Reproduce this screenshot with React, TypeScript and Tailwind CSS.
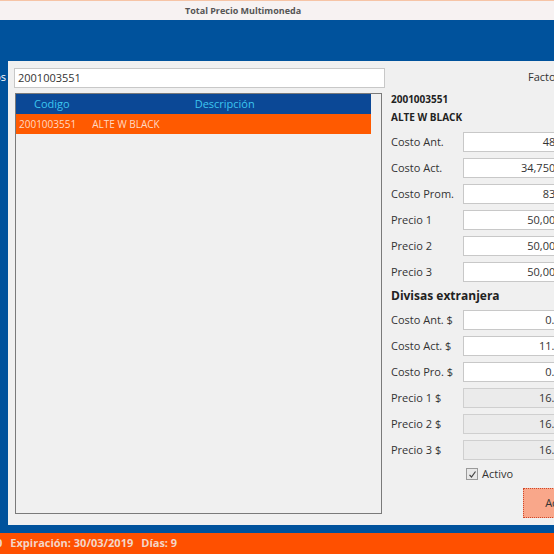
import React from "react";

const font = { fontFamily: '"Open Sans", "Noto Sans", "Liberation Sans", sans-serif' };

type Row = { label: string; value: string; disabled?: boolean };

const costos: Row[] = [
  { label: "Costo Ant.", value: "48,000" },
  { label: "Costo Act.", value: "34,750.000" },
  { label: "Costo Prom.", value: "83,000" },
  { label: "Precio 1", value: "50,000.00" },
  { label: "Precio 2", value: "50,000.00" },
  { label: "Precio 3", value: "50,000.00" },
];

const divisas: Row[] = [
  { label: "Costo Ant. $", value: "0.00" },
  { label: "Costo Act. $", value: "11.00" },
  { label: "Costo Pro. $", value: "0.00" },
  { label: "Precio 1 $", value: "16.00", disabled: true },
  { label: "Precio 2 $", value: "16.00", disabled: true },
  { label: "Precio 3 $", value: "16.00", disabled: true },
];

function Field({ row, wide }: { row: Row; wide?: boolean }) {
  return (
    <div className="flex h-[20px] items-center">
      <div className="w-[72px] shrink-0 text-[11px] text-[#333]">{row.label}</div>
      <div
        className={
          "flex h-[20px] shrink-0 items-center justify-end border px-[3px] text-[11px] text-[#333] " +
          (wide ? "w-[118px] " : "w-[108px] ") +
          (row.disabled ? "border-[#cfcfcf] bg-[#ebebeb]" : "border-[#c8c8c8] bg-white")
        }
      >
        {row.value}
      </div>
    </div>
  );
}

export default function App() {
  return (
    <div className="flex h-[554px] w-[554px] flex-col overflow-hidden bg-[#00529c]" style={font}>
      {/* window title */}
      <div className="flex h-[20px] shrink-0 items-center border-t border-[#f6c4a6] bg-[#f7f2f2] pl-[185px] text-[9px] font-bold text-[#555]">
        Total Precio Multimoneda
      </div>

      {/* blue header band */}
      <div className="h-[41px] shrink-0 bg-[#00529c]" />

      <div className="flex h-[464px] shrink-0">
        {/* left margin with clipped caption */}
        <div className="mr-[2px] flex w-[6px] shrink-0 justify-end overflow-hidden pt-[9px]">
          <span className="whitespace-nowrap text-[11px] leading-[14px] text-white">Códigos</span>
        </div>

        {/* main panel */}
        <div className="flex flex-1 overflow-hidden bg-[#f0f0f0]">
          {/* search + grid */}
          <div className="flex w-[377px] shrink-0 flex-col pl-[6px] pt-[7px]">
            <div className="flex h-[20px] items-center border border-[#c8c8c8] bg-white px-[3px] text-[11px] text-[#333]">
              2001003551
            </div>
            <div className="ml-[1px] mt-[5px] h-[421px] w-[367px] border border-[#7a7a7a] bg-[#f0f0f0]">
              <div className="flex h-[20px] w-[355px] items-center bg-[#0b4896] text-[11px] text-[#3cc6f0]">
                <span className="ml-[18px]">Codigo</span>
                <span className="ml-[125px]">Descripción</span>
              </div>
              <div className="flex h-[20px] w-[355px] items-center bg-[#ff5a00] text-[10px] text-[#ffd9c4]">
                <span className="ml-[3px]">2001003551</span>
                <span className="ml-[16px]">ALTE W BLACK</span>
              </div>
            </div>
          </div>

          {/* detail column */}
          <div className="ml-[6px] flex w-[220px] shrink-0 flex-col pt-[6px]">
            <div className="flex h-[20px] items-center pl-[137px] text-[11px] text-[#333]">Factor</div>
            <div className="mt-[3px] flex h-[18px] items-center text-[10px] font-bold text-[#222]">2001003551</div>
            <div className="flex h-[18px] items-center text-[10px] font-bold text-[#222]">ALTE W BLACK</div>
            <div className="mt-[6px] flex flex-col gap-[6px]">
              {costos.map((r) => (
                <Field key={r.label} row={r} wide />
              ))}
            </div>
            <div className="flex h-[28px] items-center text-[12px] font-bold text-[#222]">Divisas extranjera</div>
            <div className="flex flex-col gap-[6px]">
              {divisas.map((r) => (
                <Field key={r.label} row={r} />
              ))}
            </div>
            <div className="mt-[8px] flex h-[12px] items-center pl-[75px]">
              <div className="flex h-[12px] w-[12px] items-center justify-center border border-[#9a9a9a] bg-[#e8e8e8]">
                <svg width="9" height="9" viewBox="0 0 9 9">
                  <path d="M1.5 4.8 L3.5 7 L7.5 1.5" fill="none" stroke="#444" strokeWidth="1.2" />
                </svg>
              </div>
              <span className="ml-[4px] text-[11px] text-[#333]">Activo</span>
            </div>
            <div className="mt-[8px] flex h-[30px] pl-[132px]">
              <div className="flex h-[30px] w-[84px] shrink-0 items-center justify-center border border-dotted border-[#d0482a] bg-[#f9a78a] text-[11px] text-[#333]">
                Aceptar
              </div>
            </div>
          </div>
        </div>
      </div>

      {/* bottom blue strip */}
      <div className="h-[8px] shrink-0 bg-[#00529c]" />

      {/* status bar */}
      <div className="flex h-[21px] shrink-0 items-center overflow-hidden bg-[#ff5000] text-[11px] font-bold text-[#f3d6c8]">
        <span className="-ml-[4px]">0</span>
        <span className="ml-[8px]">Expiración: 30/03/2019</span>
        <span className="ml-[8px]">Días: 9</span>
      </div>
    </div>
  );
}
